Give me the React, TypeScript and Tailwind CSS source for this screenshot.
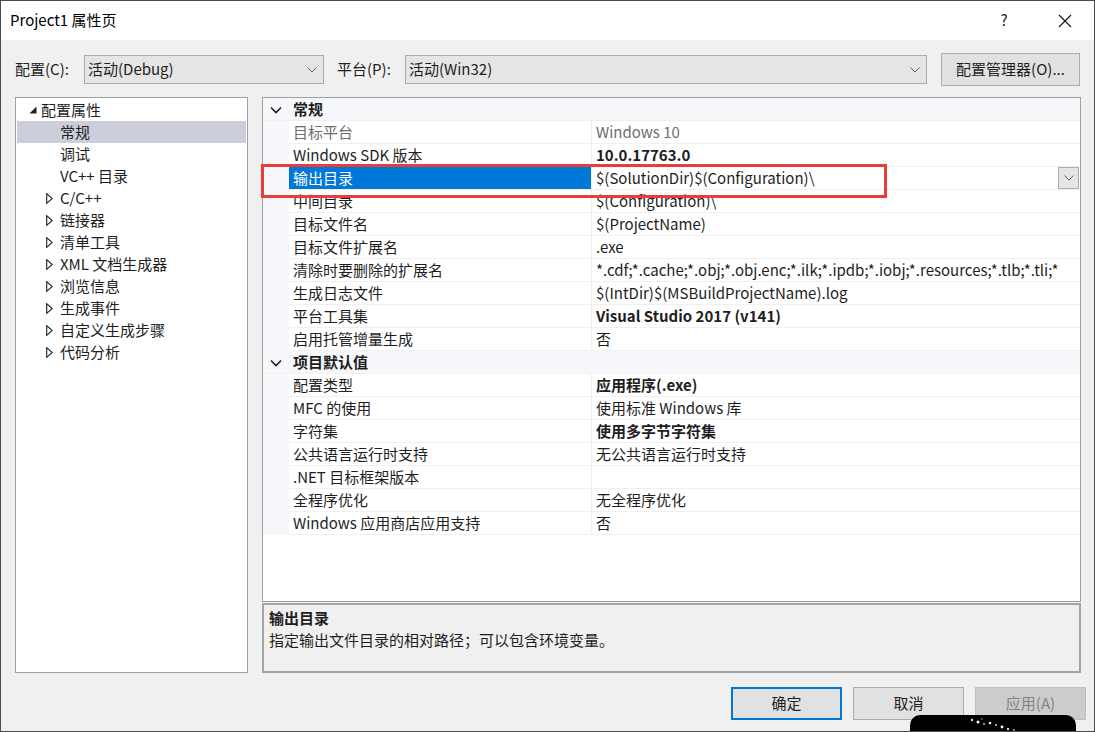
import React from "react";

const FONT = { fontFamily: '"Noto Sans CJK SC", "Noto Sans", sans-serif' };

function Chevron({ className = "" }: { className?: string }) {
  return (
    <svg width="10" height="6" viewBox="0 0 10 6" className={className}>
      <path d="M0.5 0.5 L5 5 L9.5 0.5" fill="none" stroke="#606060" strokeWidth="1" />
    </svg>
  );
}

function GroupChevron() {
  return (
    <svg width="12" height="8" viewBox="0 0 12 8">
      <path d="M1 1.5 L6 6.5 L11 1.5" fill="none" stroke="#1e1e1e" strokeWidth="1.6" />
    </svg>
  );
}

type Row =
  | { kind: "group"; name: string }
  | { kind: "prop"; name: string; value: string; bold?: boolean; gray?: boolean; selected?: boolean };

const rows: Row[] = [
  { kind: "group", name: "常规" },
  { kind: "prop", name: "目标平台", value: "Windows 10", gray: true },
  { kind: "prop", name: "Windows SDK 版本", value: "10.0.17763.0", bold: true },
  { kind: "prop", name: "输出目录", value: "$(SolutionDir)$(Configuration)\\", selected: true },
  { kind: "prop", name: "中间目录", value: "$(Configuration)\\" },
  { kind: "prop", name: "目标文件名", value: "$(ProjectName)" },
  { kind: "prop", name: "目标文件扩展名", value: ".exe" },
  {
    kind: "prop",
    name: "清除时要删除的扩展名",
    value: "*.cdf;*.cache;*.obj;*.obj.enc;*.ilk;*.ipdb;*.iobj;*.resources;*.tlb;*.tli;*",
  },
  { kind: "prop", name: "生成日志文件", value: "$(IntDir)$(MSBuildProjectName).log" },
  { kind: "prop", name: "平台工具集", value: "Visual Studio 2017 (v141)", bold: true },
  { kind: "prop", name: "启用托管增量生成", value: "否" },
  { kind: "group", name: "项目默认值" },
  { kind: "prop", name: "配置类型", value: "应用程序(.exe)", bold: true },
  { kind: "prop", name: "MFC 的使用", value: "使用标准 Windows 库" },
  { kind: "prop", name: "字符集", value: "使用多字节字符集", bold: true },
  { kind: "prop", name: "公共语言运行时支持", value: "无公共语言运行时支持" },
  { kind: "prop", name: ".NET 目标框架版本", value: "" },
  { kind: "prop", name: "全程序优化", value: "无全程序优化" },
  { kind: "prop", name: "Windows 应用商店应用支持", value: "否" },
];

const tree: { label: string; level: 0 | 1; arrow?: "open" | "closed"; selected?: boolean }[] = [
  { label: "配置属性", level: 0, arrow: "open" },
  { label: "常规", level: 1, selected: true },
  { label: "调试", level: 1 },
  { label: "VC++ 目录", level: 1 },
  { label: "C/C++", level: 1, arrow: "closed" },
  { label: "链接器", level: 1, arrow: "closed" },
  { label: "清单工具", level: 1, arrow: "closed" },
  { label: "XML 文档生成器", level: 1, arrow: "closed" },
  { label: "浏览信息", level: 1, arrow: "closed" },
  { label: "生成事件", level: 1, arrow: "closed" },
  { label: "自定义生成步骤", level: 1, arrow: "closed" },
  { label: "代码分析", level: 1, arrow: "closed" },
];

function TreePanel() {
  return (
    <div className="w-[233px] shrink-0 h-full bg-white border border-[#a0a0a0] pt-[1px] px-[1px]">
      {tree.map((t, i) => (
        <div
          key={i}
          className={`h-[22px] flex items-center whitespace-nowrap ${t.selected ? "bg-[#cccedb]" : ""}`}
        >
          {t.level === 0 ? (
            <>
              <div className="w-[24px] flex justify-end pr-[4px]">
                <svg width="8" height="8" viewBox="0 0 8 8">
                  <path d="M7.5 0.5 L7.5 7.5 L0.5 7.5 Z" fill="#1e1e1e" />
                </svg>
              </div>
              <span>{t.label}</span>
            </>
          ) : (
            <>
              <div className="w-[43px] flex justify-end pr-[7px]">
                {t.arrow === "closed" && (
                  <svg width="7" height="11" viewBox="0 0 7 11">
                    <path d="M0.7 0.7 L6.2 5.5 L0.7 10.3 Z" fill="none" stroke="#1e1e1e" strokeWidth="1.1" />
                  </svg>
                )}
              </div>
              <span>{t.label}</span>
            </>
          )}
        </div>
      ))}
    </div>
  );
}

function Grid() {
  return (
    <div className="relative h-[505px] bg-white border border-[#a0a0a0]">
      <div className="flex flex-col">
        {rows.map((r, i) =>
          r.kind === "group" ? (
            <div key={i} className="h-[23px] flex items-center bg-[#f5f7fa] border-b border-[#f0f0f0]">
              <div className="w-[26px] flex justify-center pt-[1px]">
                <GroupChevron />
              </div>
              <span className="pl-[4px] pt-[1px] font-bold">{r.name}</span>
            </div>
          ) : (
            <div key={i} className="h-[23px] flex">
              <div className="w-[26px] shrink-0 bg-[#f5f7fa]" />
              <div
                className={`w-[303px] shrink-0 flex items-center pl-[4px] pt-[1px] border-b border-r border-[#f0f0f0] ${
                  r.selected ? "bg-[#0078d7] text-white" : r.gray ? "text-[#6d6d6d]" : "text-[#1e1e1e]"
                }`}
              >
                <span className="whitespace-nowrap">{r.name}</span>
              </div>
              <div
                className={`flex-1 min-w-0 flex items-center pl-[4px] border-b border-[#f0f0f0] overflow-hidden ${
                  r.gray ? "text-[#6d6d6d]" : "text-[#1e1e1e]"
                } ${r.bold ? "font-bold" : ""}`}
              >
                <span className="whitespace-nowrap flex-1 overflow-hidden pt-[1px]">{r.value}</span>
                {r.selected && (
                  <div className="w-[21px] h-[22px] mr-[1px] shrink-0 bg-[#e5e5e5] border border-[#acacac] flex items-center justify-center">
                    <Chevron />
                  </div>
                )}
              </div>
            </div>
          )
        )}
      </div>
      <div className="absolute left-[-2px] top-[66px] w-[626px] h-[34px] border-[3px] border-[#ec3b3b]" />
    </div>
  );
}

function Dropdown({ text, width }: { text: string; width: string }) {
  return (
    <div className={`${width} shrink-0 h-[29px] bg-[#e5e5e5] border border-[#acacac] flex items-center justify-between pl-[3px] pr-[6px]`}>
      <span>{text}</span>
      <Chevron />
    </div>
  );
}

export default function App() {
  return (
    <div
      className="w-[1095px] h-[732px] bg-[#f0f0f0] border border-[#4a4a4a] flex flex-col text-[15px] text-[#1e1e1e] overflow-hidden relative"
      style={FONT}
    >
      {/* title bar */}
      <div className="h-[39px] bg-white flex items-center justify-between shrink-0">
        <span className="pl-[9px] text-[15px] text-black">Project1 属性页</span>
        <div className="flex items-center">
          <span className="w-[46px] text-center text-[15px] text-[#222] mr-[15px]">?</span>
          <div className="w-[46px] flex justify-center mr-[6px]">
            <svg width="14" height="14" viewBox="0 0 14 14">
              <path d="M1 1 L13 13 M13 1 L1 13" stroke="#111" strokeWidth="1.1" />
            </svg>
          </div>
        </div>
      </div>

      {/* config row */}
      <div className="h-[57px] flex items-center shrink-0 pl-[14px] pr-[14px] pt-[2px]">
        <span className="w-[69px] shrink-0">配置(C):</span>
        <Dropdown text="活动(Debug)" width="w-[240px]" />
        <span className="ml-[13px] w-[68px] shrink-0">平台(P):</span>
        <Dropdown text="活动(Win32)" width="w-[522px]" />
        <div className="ml-[14px] w-[139px] shrink-0 h-[33px] bg-[#e1e1e1] border border-[#adadad] flex items-center justify-center">
          配置管理器(O)...
        </div>
      </div>

      {/* main area */}
      <div className="flex pl-[14px] pr-[13px] gap-[14px] h-[576px] shrink-0">
        <TreePanel />
        <div className="flex-1 min-w-0 flex flex-col gap-[1px]">
          <Grid />
          <div className="h-[70px] border-2 border-[#a5a5a5] px-[5px] pt-[2px]">
            <div className="font-bold leading-[22px]">输出目录</div>
            <div className="leading-[22px]">指定输出文件目录的相对路径；可以包含环境变量。</div>
          </div>
        </div>
      </div>

      {/* buttons */}
      <div className="flex justify-end items-start pt-[14px] pr-[8px] gap-[11px]">
        <div className="w-[111px] h-[33px] bg-[#e1e1e1] border-2 border-[#0078d7] flex items-center justify-center">确定</div>
        <div className="w-[111px] h-[33px] bg-[#e1e1e1] border border-[#adadad] flex items-center justify-center">取消</div>
        <div className="w-[111px] h-[33px] bg-[#cccccc] border border-[#bfbfbf] flex items-center justify-center text-[#838383]">
          应用(A)
        </div>
      </div>

      {/* dark artifact at bottom right */}
      <div className="absolute left-[909px] top-[714px] w-[166px] h-[30px] bg-black rounded-[10px]">
        <svg width="166" height="20" viewBox="0 0 166 20" className="absolute left-0 top-0">
          <circle cx="62" cy="5" r="1.2" fill="#ddd" />
          <circle cx="68" cy="7" r="1.5" fill="#fff" />
          <circle cx="74" cy="9" r="1" fill="#bbb" />
          <circle cx="80" cy="8" r="1.3" fill="#eee" />
          <circle cx="86" cy="10" r="1" fill="#ccc" />
          <circle cx="92" cy="12" r="1.4" fill="#fff" />
          <circle cx="98" cy="14" r="1.2" fill="#ddd" />
          <circle cx="104" cy="15" r="1" fill="#aaa" />
          <circle cx="72" cy="4" r="0.8" fill="#999" />
        </svg>
      </div>
    </div>
  );
}
